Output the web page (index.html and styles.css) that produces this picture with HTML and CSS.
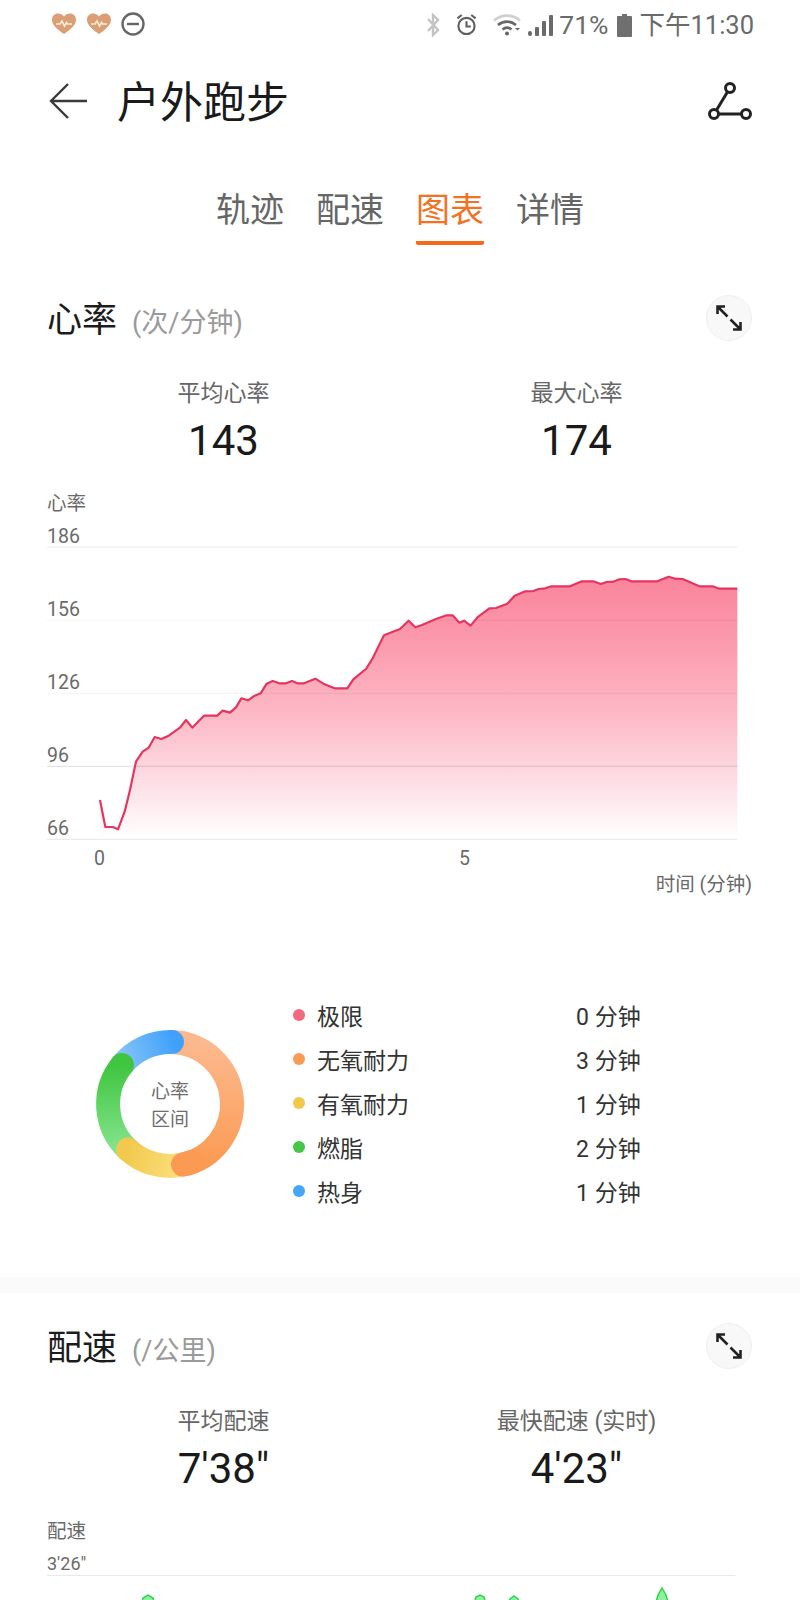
FILE: index.html
```html
<!DOCTYPE html>
<html lang="zh">
<head>
<meta charset="utf-8">
<title>户外跑步</title>
<link rel="stylesheet" href="styles.css">
</head>
<body>
<div class="page">
  <div class="status">
    <div class="status-left">
      <svg class="ic-heart" viewBox="0 0 24 22"><path class="heart-fill" d="M12 21C5 16 0 12 0 6.500 0 3 2.700 .5 6 .5c2.500 0 4.600 1.200 6 3 1.400-1.800 3.500-3 6-3 3.300 0 6 2.500 6 6 0 5.500-5 9.500-12 14.500z"/><path class="heart-pulse" d="M4 11h4l2-3 2.500 5 2-3.500 1 1.500H20"/></svg>
      <svg class="ic-heart" viewBox="0 0 24 22"><path class="heart-fill" d="M12 21C5 16 0 12 0 6.500 0 3 2.700 .5 6 .5c2.500 0 4.600 1.200 6 3 1.400-1.800 3.500-3 6-3 3.300 0 6 2.500 6 6 0 5.500-5 9.500-12 14.500z"/><path class="heart-pulse" d="M4 11h4l2-3 2.500 5 2-3.500 1 1.500H20"/></svg>
      <svg class="ic-dnd" viewBox="0 0 24 24"><circle cx="12" cy="12" r="10.500"/><path d="M6 12h12"/></svg>
    </div>
    <div class="status-right">
      <svg class="ic-bt" viewBox="0 0 14 24"><path d="M2 6l10 11-5 5V2l5 5L2 18"/></svg>
      <svg class="ic-alarm" viewBox="0 0 22 24"><circle cx="11" cy="13" r="8.500"/><path d="M11 8v5.500h4.500M1.500 5L6 1.500M20.500 5L16 1.500"/></svg>
      <svg class="ic-wifi" viewBox="0 0 28 24"><path class="wifi-faint" d="M1 7.500C8.500 1 19.500 1 27 7.500"/><path class="wifi-dark" d="M5 12c5.500-4.500 12.500-4.500 18 0M9.500 16.500c3-2.500 6-2.500 9 0"/><circle class="wifi-dot" cx="14" cy="20.500" r="2"/><path class="wifi-dot" d="M22 15h5l-2.500 2.500z"/></svg>
      <svg class="ic-signal" viewBox="0 0 25 22"><rect x="0" y="17" width="4" height="5" rx="2"/><rect x="7" y="13" width="4" height="9" rx="1"/><rect x="14" y="7" width="4" height="15" rx="1"/><rect x="21" y="1" width="4" height="21" rx="1"/></svg>
      <span class="st-pct">71%</span>
      <svg class="ic-batt" viewBox="0 0 15 24"><path d="M5 1h5v2H5z"/><rect y="3" width="15" height="21" rx="1"/></svg>
      <span class="st-time">下午11:30</span>
    </div>
  </div>

  <header class="appbar">
    <svg class="ic-back" viewBox="0 0 38 36"><path d="M38 18H2M19 1L2 18l17 17"/></svg>
    <h1 class="title">户外跑步</h1>
    <svg class="ic-route" viewBox="0 0 44 40"><circle cx="22" cy="6" r="4.500"/><circle cx="6" cy="32" r="4.500"/><circle cx="38" cy="32" r="4.500"/><path d="M19.600 9.800L8.400 28.200M10.500 32h23"/></svg>
  </header>

  <nav class="tabs">
    <span class="tab">轨迹</span>
    <span class="tab">配速</span>
    <span class="tab tab-active">图表</span>
    <span class="tab">详情</span>
  </nav>

  <section class="section section-first">
    <div class="sec-head">
      <h2 class="sec-title">心率</h2>
      <span class="sec-unit">(次/分钟)</span>
      <div class="expand"><svg viewBox="0 0 26 26"><path d="M1.500 9V1.500H9M1.500 1.500l10 10M17 24.500h7.500V17M24.500 24.500l-10-10"/></svg></div>
    </div>
    <div class="stats">
      <div class="stat"><div class="stat-label">平均心率</div><div class="stat-num">143</div></div>
      <div class="stat"><div class="stat-label">最大心率</div><div class="stat-num">174</div></div>
    </div>
    <svg class="chart-hr" viewBox="47 490 706 410">
      <defs>
        <linearGradient id="hrFill" gradientUnits="userSpaceOnUse" x1="0" y1="290" x2="0" y2="1078">
          <stop offset="0" stop-color="#f9849b"/>
          <stop offset=".25" stop-color="#fb9aad"/>
          <stop offset=".55" stop-color="#fcbcc8"/>
          <stop offset=".72" stop-color="#fcd5dd"/>
          <stop offset="1" stop-color="#ffffff"/>
        </linearGradient>
      </defs>
      <text class="ax" x="47" y="510">心率</text>
      <text class="ax" x="47" y="543">186</text>
      <text class="ax" x="47" y="616">156</text>
      <text class="ax" x="47" y="689">126</text>
      <text class="ax" x="47" y="762">96</text>
      <text class="ax" x="47" y="835">66</text>
      <text class="ax" x="94" y="865">0</text>
      <text class="ax" x="459" y="865">5</text>
      <text class="ax ax-end" x="752" y="891">时间 (分钟)</text>
      <g transform="translate(0 480) scale(.33333)">
        <path class="area" d="M300 960L316 1041 338 1041 354 1048 374 995 390 930 408 845 428 815 446 803 464 771 484 777 506 767 540 743 558 720 577 743 597 722 612 707 652 707 668 692 690 698 708 682 724 655 744 661 764 647 782 640 800 611 818 603 838 610 858 610 876 603 892 610 912 610 946 596 970 611 1004 625 1042 625 1060 598 1078 583 1098 567 1118 535 1152 466 1200 447 1226 422 1246 442 1266 435 1310 416 1340 406 1358 406 1378 428 1392 422 1412 437 1432 412 1468 385 1488 384 1522 371 1544 347 1576 334 1600 333 1616 327 1636 325 1654 319 1710 319 1746 304 1780 304 1802 312 1820 306 1840 305 1858 298 1876 297 1894 304 1972 304 2006 290 2026 296 2048 297 2098 319 2138 319 2158 326 2212 326V1078H300z"/>
        <path class="grid grid-top" d="M141 201H2212"/>
        <path class="grid grid-soft" d="M141 421H2212M141 640H2212"/>
        <path class="grid grid-mid" d="M141 859H2212"/>
        <path class="grid grid-base" d="M141 1078H2212"/>
        <path class="line" d="M300 960L316 1041 338 1041 354 1048 374 995 390 930 408 845 428 815 446 803 464 771 484 777 506 767 540 743 558 720 577 743 597 722 612 707 652 707 668 692 690 698 708 682 724 655 744 661 764 647 782 640 800 611 818 603 838 610 858 610 876 603 892 610 912 610 946 596 970 611 1004 625 1042 625 1060 598 1078 583 1098 567 1118 535 1152 466 1200 447 1226 422 1246 442 1266 435 1310 416 1340 406 1358 406 1378 428 1392 422 1412 437 1432 412 1468 385 1488 384 1522 371 1544 347 1576 334 1600 333 1616 327 1636 325 1654 319 1710 319 1746 304 1780 304 1802 312 1820 306 1840 305 1858 298 1876 297 1894 304 1972 304 2006 290 2026 296 2048 297 2098 319 2138 319 2158 326 2212 326"/>
      </g>
    </svg>
    <div class="zones">
      <svg class="donut" viewBox="-80 -80 160 160">
        <defs>
          <linearGradient id="dOrange" gradientUnits="userSpaceOnUse" x1="30" y1="-60" x2="20" y2="62"><stop offset="0" stop-color="#fbb88c"/><stop offset="1" stop-color="#fb9a52"/></linearGradient>
          <linearGradient id="dBlue" gradientUnits="userSpaceOnUse" x1="-48" y1="-40" x2="5" y2="-60"><stop offset="0" stop-color="#86c4f6"/><stop offset="1" stop-color="#3fa1fb"/></linearGradient>
          <linearGradient id="dGreen" gradientUnits="userSpaceOnUse" x1="-55" y1="-40" x2="-50" y2="45"><stop offset="0" stop-color="#3fc53f"/><stop offset="1" stop-color="#84e48c"/></linearGradient>
          <linearGradient id="dYellow" gradientUnits="userSpaceOnUse" x1="-42" y1="46" x2="13" y2="61"><stop offset="0" stop-color="#f2c94f"/><stop offset="1" stop-color="#fbe07c"/></linearGradient>
        </defs>
        <path class="seg seg-butt" stroke="url(#dOrange)" d="M2 -62A62 62 0 0 1 13 60.600"/>
        <path class="seg" stroke="url(#dBlue)" d="M-48 -39A62 62 0 0 1 2 -62"/>
        <path class="seg" stroke="url(#dGreen)" d="M-42 45.600A62 62 0 0 1 -48 -39"/>
        <path class="seg" stroke="url(#dYellow)" d="M13 60.600A62 62 0 0 1 -42 45.600"/>
        <path class="seg" stroke="#fb9a52" d="M22 58A62 62 0 0 1 13 60.600"/>
        <text class="donut-text" x="0" y="-6">心率</text>
        <text class="donut-text" x="0" y="22">区间</text>
      </svg>
      <ul class="legend">
        <li class="leg-row"><i class="dot dot-red"></i><span class="leg-name">极限</span><span class="leg-val">0 分钟</span></li>
        <li class="leg-row"><i class="dot dot-orange"></i><span class="leg-name">无氧耐力</span><span class="leg-val">3 分钟</span></li>
        <li class="leg-row"><i class="dot dot-yellow"></i><span class="leg-name">有氧耐力</span><span class="leg-val">1 分钟</span></li>
        <li class="leg-row"><i class="dot dot-green"></i><span class="leg-name">燃脂</span><span class="leg-val">2 分钟</span></li>
        <li class="leg-row"><i class="dot dot-blue"></i><span class="leg-name">热身</span><span class="leg-val">1 分钟</span></li>
      </ul>
    </div>
  </section>

  <div class="band"></div>

  <section class="section section-second">
    <div class="sec-head">
      <h2 class="sec-title">配速</h2>
      <span class="sec-unit">(/公里)</span>
      <div class="expand"><svg viewBox="0 0 26 26"><path d="M1.500 9V1.500H9M1.500 1.500l10 10M17 24.500h7.500V17M24.500 24.500l-10-10"/></svg></div>
    </div>
    <div class="stats">
      <div class="stat"><div class="stat-label">平均配速</div><div class="stat-num">7'38"</div></div>
      <div class="stat"><div class="stat-label">最快配速 (实时)</div><div class="stat-num">4'23"</div></div>
    </div>
    <svg class="chart-pace" viewBox="47 1518 706 90">
      <text class="ax" x="47" y="1538">配速</text>
      <text class="ax ax-narrow" x="47" y="1570">3'26"</text>
      <path class="grid grid-top" d="M47 1575.500H735"/>
      <path class="pace" d="M140 1610L143 1598 148 1595 153 1598 156 1610z"/>
      <path class="pace" d="M472 1610L476 1597 480 1595 484 1597 488 1610z"/>
      <path class="pace" d="M506 1610L510 1599 514 1596 518 1599 522 1610z"/>
      <path class="pace" d="M654 1610L658 1595 662 1588 666 1595 670 1610z"/>
    </svg>
  </section>
</div>
</body>
</html>
```
FILE: styles.css
```css
* { box-sizing: border-box; }
html, body { margin: 0; padding: 0; background: #fff; }
body { font-family: Roboto, "Noto Sans CJK SC", sans-serif; color: #1c1c1c; }
.page { width: 800px; height: 1600px; overflow: hidden; background: #fff; }

/* status bar */
.status { height: 48px; display: flex; align-items: center; justify-content: space-between; padding: 0 46px 0 52px; color: #666; }
.status-left, .status-right { display: flex; align-items: center; }
.status-right { margin-top: 2px; }
.ic-heart { width: 24px; height: 22px; margin-right: 11px; }
.heart-fill { fill: #dc9e74; }
.heart-pulse { fill: none; stroke: #fdf0dc; stroke-width: 1.6; }
.ic-dnd { width: 24px; height: 24px; margin-left: -1px; fill: none; stroke: #666; stroke-width: 2.4; }
.ic-bt { width: 14px; height: 24px; fill: none; stroke: #c4c4c4; stroke-width: 2.4; }
.ic-alarm { width: 21px; height: 24px; margin-left: 16px; fill: none; stroke: #5f5f5f; stroke-width: 2.2; }
.ic-wifi { width: 28px; height: 24px; margin-left: 16px; fill: none; }
.wifi-faint { stroke: #cfcfcf; stroke-width: 2.6; }
.wifi-dark { stroke: #666; stroke-width: 2.6; }
.wifi-dot { fill: #666; }
.ic-signal { width: 25px; height: 22px; margin-left: 7px; fill: #6a6a6a; }
.st-pct { font-size: 26.5px; line-height: 32px; margin-left: 6px; color: #6a6a6a; }
.ic-batt { width: 15px; height: 24px; margin-left: 9px; fill: #6f6f6f; }
.st-time { font-size: 25.5px; line-height: 32px; margin-left: 7px; color: #6a6a6a; }

/* app bar */
.appbar { height: 110px; display: flex; align-items: center; padding: 0 48px 0 49px; }
.ic-back { width: 38px; height: 36px; margin-bottom: 4px; fill: none; stroke: #3a3a3a; stroke-width: 2.4; flex: none; }
.title { font-size: 43px; font-weight: 400; line-height: 60px; margin: 0 0 0 30px; flex: 1; color: #1a1a1a; }
.ic-route { width: 44px; height: 40px; fill: none; stroke: #222; stroke-width: 3; margin-bottom: 3px; }

/* tabs */
.tabs { display: flex; justify-content: center; gap: 32px; margin-top: 17px; }
.tab { width: 68px; height: 70px; padding-top: 4px; font-size: 34px; line-height: 62px; text-align: center; color: #666; white-space: nowrap; }
.tab-active { color: #f4711f; border-bottom: 4px solid #f4691a; border-radius: 0 0 2px 2px; }

/* sections */
.section { padding: 0 47px; }
.section-first { margin-top: 50px; height: 982px; }
.section-second { margin-top: 30px; }
.sec-head { display: flex; align-items: center; height: 46px; }
.sec-title { font-size: 35px; font-weight: 400; line-height: 46px; margin: 6px 0 0; color: #1c1c1c; }
.sec-unit { font-size: 27px; line-height: 46px; margin: 10px 0 0 15px; color: #9a9a9a; flex: 1; }
.expand { width: 46px; height: 46px; margin-right: 1px; border-radius: 50%; background: #f8f8f8; border: 1px solid #efefef; display: flex; align-items: center; justify-content: center; }
.expand svg { width: 26px; height: 26px; fill: none; stroke: #222; stroke-width: 2.6; }

.stats { display: grid; grid-template-columns: 1fr 1fr; margin-top: 38px; text-align: center; }
.stat-label { font-size: 23px; line-height: 30px; color: #666; }
.stat-num { font-size: 42px; line-height: 50px; margin-top: 7px; color: #1a1a1a; }

/* charts */
.chart-hr { display: block; width: 706px; height: 410px; margin-top: 24px; }
.chart-pace { display: block; width: 706px; height: 90px; margin-top: 24px; }
.ax { font-size: 19.500px; fill: #6a6a6a; font-family: Roboto, "Noto Sans CJK SC", sans-serif; }
.ax-end { text-anchor: end; }
.ax-narrow { font-size: 18px; }
.area { fill: url(#hrFill); }
.grid { fill: none; }
.grid-top { stroke: #e9e9e9; stroke-width: 3; }
.chart-pace .grid-top { stroke-width: 1; }
.grid-soft { stroke: rgba(0,0,0,.05); stroke-width: 3; }
.grid-mid { stroke: rgba(90,60,60,.18); stroke-width: 3; }
.grid-base { stroke: #e6e6e6; stroke-width: 3; }
.line { fill: none; stroke: #e5355f; stroke-width: 6.500; stroke-linejoin: round; }
.pace { fill: #8ff0a0; stroke: #2fd34f; stroke-width: 1.5; }

/* zones */
.zones { display: flex; align-items: center; padding-top: 93px; }
.donut { width: 160px; height: 160px; margin: 2px 0 0 43px; flex: none; }
.seg { fill: none; stroke-width: 24; stroke-linecap: round; }
.seg-butt { stroke-linecap: butt; }
.donut-text { font-size: 19px; fill: #6e6e6e; text-anchor: middle; }
.legend { list-style: none; margin: 0 0 0 43px; padding: 0; }
.leg-row { display: flex; align-items: center; height: 44px; font-size: 23px; color: #333; }
.dot { width: 12px; height: 12px; border-radius: 50%; flex: none; margin-right: 12px; }
.dot-red { background: #f5697f; }
.dot-orange { background: #f99a55; }
.dot-yellow { background: #f2c84a; }
.dot-green { background: #45c645; }
.dot-blue { background: #45a5fb; }
.leg-name { width: 259px; }
.leg-val { white-space: nowrap; }

.band { height: 16px; background: #fafafa; }
```
